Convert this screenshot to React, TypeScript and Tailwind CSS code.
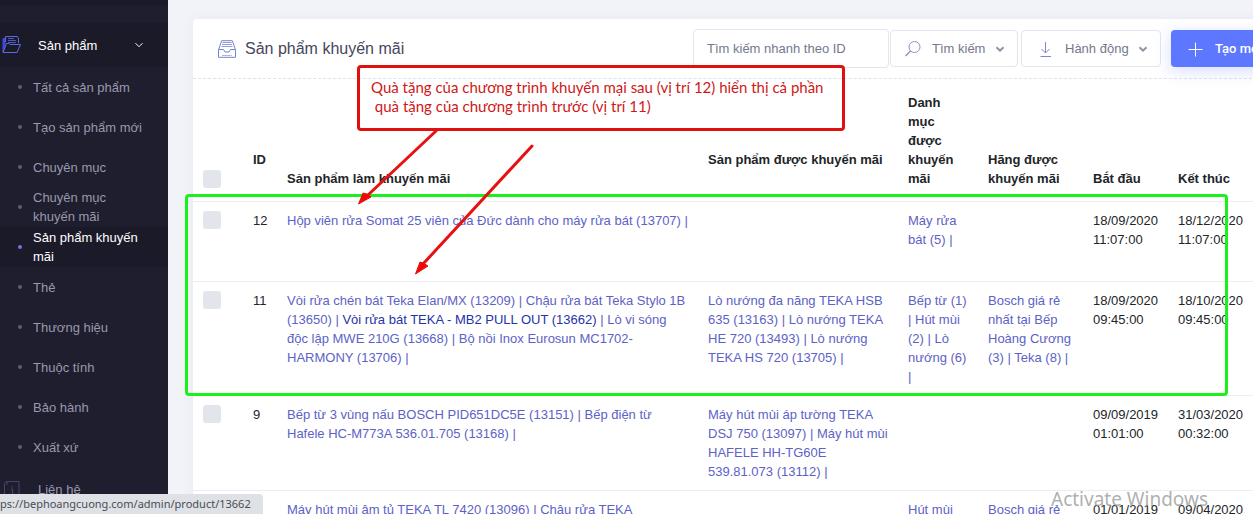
import React from "react";

type Entry = { label: string; active?: boolean };

const menu: Entry[] = [
  { label: "Tất cả sản phẩm" },
  { label: "Tạo sản phẩm mới" },
  { label: "Chuyên mục" },
  { label: "Chuyên mục khuyến mãi" },
  { label: "Sản phẩm khuyến mãi", active: true },
  { label: "Thẻ" },
  { label: "Thương hiệu" },
  { label: "Thuộc tính" },
  { label: "Bảo hành" },
  { label: "Xuất xứ" },
];

type Row = {
  id: string;
  gifts: string[];
  products: string[];
  categories: string[];
  brands: string[];
  start: string[];
  end: string[];
  open?: boolean;
};

const hovered = "Vòi rửa bát TEKA - MB2 PULL OUT (13662)";

const rows: Row[] = [
  {
    id: "12",
    gifts: ["Hộp viên rửa Somat 25 viên của Đức dành cho máy rửa bát (13707)"],
    products: [],
    categories: ["Máy rửa bát (5)"],
    brands: [],
    start: ["18/09/2020", "11:07:00"],
    end: ["18/12/2020", "11:07:00"],
  },
  {
    id: "11",
    gifts: [
      "Vòi rửa chén bát Teka Elan/MX (13209)",
      "Chậu rửa bát Teka Stylo 1B (13650)",
      hovered,
      "Lò vi sóng độc lập MWE 210G (13668)",
      "Bộ nồi Inox Eurosun MC1702-HARMONY (13706)",
    ],
    products: [
      "Lò nướng đa năng TEKA HSB 635 (13163)",
      "Lò nướng TEKA HE 720 (13493)",
      "Lò nướng TEKA HS 720 (13705)",
    ],
    categories: ["Bếp từ (1)", "Hút mùi (2)", "Lò nướng (6)"],
    brands: ["Bosch giá rẻ nhất tại Bếp Hoàng Cương (3)", "Teka (8)"],
    start: ["18/09/2020", "09:45:00"],
    end: ["18/10/2020", "09:45:00"],
  },
  {
    id: "9",
    gifts: [
      "Bếp từ 3 vùng nấu BOSCH PID651DC5E (13151)",
      "Bếp điện từ Hafele HC-M773A 536.01.705 (13168)",
    ],
    products: [
      "Máy hút mùi áp tường TEKA DSJ 750 (13097)",
      "Máy hút mùi HAFELE HH-TG60E 539.81.073 (13112)",
    ],
    categories: [],
    brands: [],
    start: ["09/09/2019", "01:01:00"],
    end: ["31/03/2020", "00:32:00"],
  },
  {
    id: "",
    gifts: ["Máy hút mùi âm tủ TEKA TL 7420 (13096)", "Chậu rửa TEKA"],
    products: [],
    categories: ["Hút mùi"],
    brands: ["Bosch giá rẻ"],
    start: ["01/01/2019"],
    end: ["09/04/2020"],
    open: true,
  },
];

function Links({ items, open }: { items: string[]; open?: boolean }) {
  return (
    <>
      {items.map((item, i) => (
        <React.Fragment key={item}>
          <a href="#" className={item === hovered ? "text-[#2334a8]" : "hover:text-[#2334a8]"}>
            {item}
          </a>
          {open && i === items.length - 1 ? "" : " | "}
        </React.Fragment>
      ))}
    </>
  );
}

function Chevron({ className }: { className: string }) {
  return (
    <svg viewBox="0 0 10 10" fill="none" stroke="currentColor" className={className}>
      <path d="M1.5 3.2 5 6.7 8.5 3.2" />
    </svg>
  );
}

function FolderIcon() {
  return (
    <svg viewBox="0 0 20 18" className="h-[18px] w-5 shrink-0" fill="none" stroke="#5a6ae6">
      <path d="M1 2.500h2V8L1 16z" fill="#3f4ae0" stroke="#3f4ae0" />
      <path d="M3.500 6V.500h12L16.500 3v4" />
      <path d="M6 2.500h6M6 4.500h8M6 6.500h8" strokeWidth=".8" />
      <path d="M1 16.500 4.500 7.500H7L8 8.500h10.500l-3.500 8z" />
    </svg>
  );
}

function ArchiveIcon() {
  return (
    <svg viewBox="0 0 18 18" className="size-[18px] shrink-0" fill="none" stroke="#7782cf">
      <path d="M.5 9.500V17.300h17V9.500h-5l-1.500 2.500h-4L5.500 9.500z" />
      <path d="M.7 9.300 3.700.700h10.600l3 8.600" />
      <path d="M4.500 2.500h9M4 4.500h10M3.500 6.500h11" strokeWidth=".8" />
      <path d="M4.500 15.500h9" strokeDasharray="1.200 .8" />
    </svg>
  );
}

const toolButton =
  "flex h-[37px] items-center rounded border border-[#e2e5ec] bg-white text-[#74788d]";

export default function App() {
  return (
    <div className="relative flex h-screen overflow-hidden bg-[#f2f3f8] font-['Liberation_Sans',Arial,sans-serif] text-[13px] leading-[19px] text-[#212529]">
      <aside className="w-[168px] shrink-0 overflow-hidden bg-[#1f1e2e] text-[#9899ac]">
        <div className="h-[5px] bg-[#1b1a28]" />
        <nav className="pt-[18px]">
          <a href="#" className="flex h-11 items-center bg-[#1b1a28] pl-[2px] pr-6 text-white">
            <FolderIcon />
            <span className="ml-4 grow">Sản phẩm</span>
            <Chevron className="size-[10px]" />
          </a>
          <ul>
            {menu.map((m) => (
              <li key={m.label}>
                <a
                  href="#"
                  className={
                    "flex h-10 items-center gap-[11px] pl-[18px] pr-6 " +
                    (m.active ? "bg-[#1b1a28] text-white" : "")
                  }
                >
                  <span
                    className={
                      "size-1 shrink-0 rounded-full " + (m.active ? "bg-[#6f73e8]" : "bg-[#5c5e72]")
                    }
                  />
                  <span>{m.label}</span>
                </a>
              </li>
            ))}
          </ul>
          <a href="#" className="flex h-11 items-center gap-[18px] pl-1">
            <svg viewBox="0 0 16 18" className="h-[18px] w-4" fill="none" stroke="#45456b">
              <path d="M3 1.500h12V17.500H.5V3zM3 1.500V5M8 6v1.500M7 9h1.500v5H10" />
            </svg>
            <span>Liên hệ</span>
          </a>
        </nav>
      </aside>

      <main className="min-w-0 grow overflow-hidden pl-[25px] pt-[19px]">
        <section className="min-w-[1114px] rounded bg-white shadow-[0_0_13px_rgba(82,63,105,0.05)]">
          <header className="flex h-[60px] items-center border-b border-dashed border-[#dfe2ee] px-[25px]">
            <ArchiveIcon />
            <h1 className="ml-[9px] grow text-[16px] text-[#48465b]">Sản phẩm khuyến mãi</h1>
            <input
              aria-label="Tìm kiếm nhanh theo ID"
              placeholder="Tìm kiếm nhanh theo ID"
              className="h-[39px] w-[196px] rounded border border-[#e2e5ec] px-[13px] placeholder:text-[#74788d]"
            />
            <button className={toolButton + " ml-px w-[128px] pl-[13px] pr-3"}>
              <svg viewBox="0 0 18 18" className="size-[18px]" fill="none" stroke="#8d93c8">
                <circle cx="10.500" cy="7" r="5.500" />
                <path d="M6.500 11 1.500 16" strokeWidth="1.400" />
              </svg>
              <span className="ml-[10px] grow text-left">Tìm kiếm</span>
              <Chevron className="size-[10px] stroke-2 opacity-80" />
            </button>
            <button className={toolButton + " ml-[3px] w-[140px] pl-[15px] pr-3"}>
              <svg viewBox="0 0 18 18" className="size-[18px]" fill="none" stroke="#7d86c8">
                <path d="M8.500 2v11M4.500 9l4 4 4-4M3.500 16.500h10.500" />
              </svg>
              <span className="ml-[10px] grow text-left">Hành động</span>
              <Chevron className="size-[10px] stroke-2 opacity-80" />
            </button>
            <button className="ml-[10px] flex h-[37px] w-[111px] items-center rounded bg-[#5d78ff] pl-4 text-white shadow-[0_4px_16px_rgba(93,120,255,0.25)]">
              <svg viewBox="0 0 16 16" className="size-4" fill="none" stroke="white">
                <path d="M8.500 1.500v14M1.500 8.500h14" />
              </svg>
              <span className="ml-3 font-['Roboto',sans-serif] font-medium">Tạo mới</span>
            </button>
          </header>
          <table className="w-full table-fixed border-collapse text-left">
            <colgroup>
              <col className="w-[50px]" />
              <col className="w-[34px]" />
              <col className="w-[421px]" />
              <col className="w-[200px]" />
              <col className="w-[80px]" />
              <col className="w-[105px]" />
              <col className="w-[85px]" />
              <col />
            </colgroup>
            <thead>
              <tr className="align-bottom *:px-[10px] *:pt-[14px] *:pb-[13px] *:font-bold">
                <th>
                  <input
                    type="checkbox"
                    aria-label="Chọn tất cả"
                    className="block size-[18px] appearance-none rounded-[3px] bg-[#e2e5ec]"
                  />
                </th>
                <th>
                  ID
                  <br />
                  <br />
                </th>
                <th>Sản phẩm làm khuyến mãi</th>
                <th>
                  Sản phẩm được khuyến mãi
                  <br />
                  <br />
                </th>
                <th>Danh mục được khuyến mãi</th>
                <th>Hãng được khuyến mãi</th>
                <th>Bắt đầu</th>
                <th>Kết thúc</th>
              </tr>
            </thead>
            <tbody>
              {rows.map((r) => (
                <tr
                  key={r.id}
                  className="h-20 border-t border-[#ebedf2] align-top text-[#5d62c6] *:px-[10px] *:py-[9px]"
                >
                  <td>
                    <input
                      type="checkbox"
                      aria-label={"Chọn " + r.id}
                      className="block size-[18px] appearance-none rounded-[3px] bg-[#e2e5ec]"
                    />
                  </td>
                  <td className="text-[#212529]">{r.id}</td>
                  <td>
                    <Links items={r.gifts} open={r.open} />
                  </td>
                  <td>
                    <Links items={r.products} open={r.open} />
                  </td>
                  <td>
                    <Links items={r.categories} open={r.open} />
                  </td>
                  <td>
                    <Links items={r.brands} open={r.open} />
                  </td>
                  <td className="text-[#212529]">{r.start.join(" ")}</td>
                  <td className="text-[#212529]">
                    {r.end.map((part) => (
                      <div key={part}>{part}</div>
                    ))}
                  </td>
                </tr>
              ))}
            </tbody>
          </table>
        </section>
      </main>

      <div className="absolute left-[357px] top-[65px] h-[66px] w-[488px] rounded-sm border-[3px] border-[#e01010] pl-[11px] pt-[10px] font-['Lato',sans-serif] text-[15px] whitespace-pre text-[#d01818]">
        Quà tặng của chương trình khuyến mại sau (vị trí 12) hiển thị cả phần{"\n"} quà tặng của
        chương trình trước (vị trí 11)
      </div>
      <div className="pointer-events-none absolute left-[185px] top-[194px] h-[202px] w-[1043px] rounded-sm border-[3px] border-[#1cf01c]" />
      <svg
        viewBox="350 120 200 160"
        className="pointer-events-none absolute left-[350px] top-[120px] h-40 w-[200px]"
        fill="#f00808"
        stroke="#e81010"
      >
        <path d="M436 131 368 195M532 146 423 264" strokeWidth="3" strokeLinecap="round" />
        <path d="M358.500 204 363 193 367 194 371 197zM415.500 274 420 262 423 263 428 266z" />
      </svg>
      <div className="absolute bottom-0 left-0 h-5 rounded-tr bg-[#dee1e6] pr-3 font-['Noto_Sans',sans-serif] text-[11px] leading-[20px] text-[#4a4d52]">
        ps://bephoangcuong.com/admin/product/13662
      </div>
      <div className="pointer-events-none absolute bottom-[3px] right-[45px] font-['Noto_Sans',sans-serif] text-[19px] leading-6 text-[#9a9a9a]/80">
        Activate Windows
      </div>
    </div>
  );
}
